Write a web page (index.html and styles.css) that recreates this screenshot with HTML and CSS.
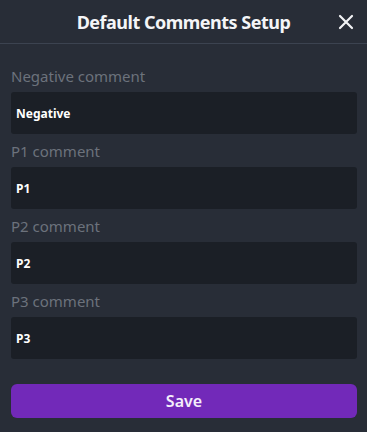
FILE: index.html
```html
<!DOCTYPE html>
<html>
<head>
<meta charset="utf-8">
<link rel="stylesheet" href="styles.css">
</head>
<body>
<div class="modal">
  <header class="header">
    <h1 class="title">Default Comments Setup</h1>
    <button class="close" aria-label="Close">
      <svg width="16" height="16" viewBox="0 0 16 16"><path d="M2 2L14 14M14 2L2 14" stroke="#f2f3f5" stroke-width="2.2" stroke-linecap="round"/></svg>
    </button>
  </header>
  <div class="body">
    <label class="field">
      <span class="label">Negative comment</span>
      <span class="input">Negative</span>
    </label>
    <label class="field">
      <span class="label">P1 comment</span>
      <span class="input">P1</span>
    </label>
    <label class="field">
      <span class="label">P2 comment</span>
      <span class="input">P2</span>
    </label>
    <label class="field">
      <span class="label">P3 comment</span>
      <span class="input">P3</span>
    </label>
    <button class="save">Save</button>
  </div>
</div>
</body>
</html>
```
FILE: styles.css
```css
* { box-sizing: border-box; }
html, body { margin: 0; padding: 0; }
body {
  background: #282d37;
  font-family: "Noto Sans", "Open Sans", sans-serif;
  width: 367px;
  height: 432px;
  overflow: hidden;
}
.modal { display: flex; flex-direction: column; }
.header {
  position: relative;
  height: 44px;
  border-bottom: 1px solid #3c4350;
  display: flex;
  align-items: center;
  justify-content: center;
}
.title {
  margin: 0;
  font-size: 18px;
  font-weight: 700;
  color: #f4f5f7;
  padding-left: 0;
  letter-spacing: -0.5px;
}
.close {
  position: absolute;
  right: 13px;
  top: 14px;
  background: none;
  border: 0;
  padding: 0;
  width: 16px;
  height: 16px;
  display: flex;
}
.body {
  padding: 20px 10px 0 11px;
  display: flex;
  flex-direction: column;
}
.field { display: flex; flex-direction: column; margin-bottom: 5px; }
.label {
  font-size: 15px;
  line-height: 24px;
  color: #6c727c;
  margin-bottom: 4px;
}
.input {
  height: 42px;
  background: #1b1f26;
  border-radius: 3px;
  padding: 0 5px;
  display: flex;
  align-items: center;
  font-size: 12px;
  font-weight: 700;
  color: #ffffff;
}
.save {
  margin-top: 20px;
  height: 34px;
  border: 0;
  border-radius: 6px;
  background: #7229b9;
  color: #f4eefb;
  font-family: inherit;
  font-size: 16px;
  font-weight: 600;
}
```
